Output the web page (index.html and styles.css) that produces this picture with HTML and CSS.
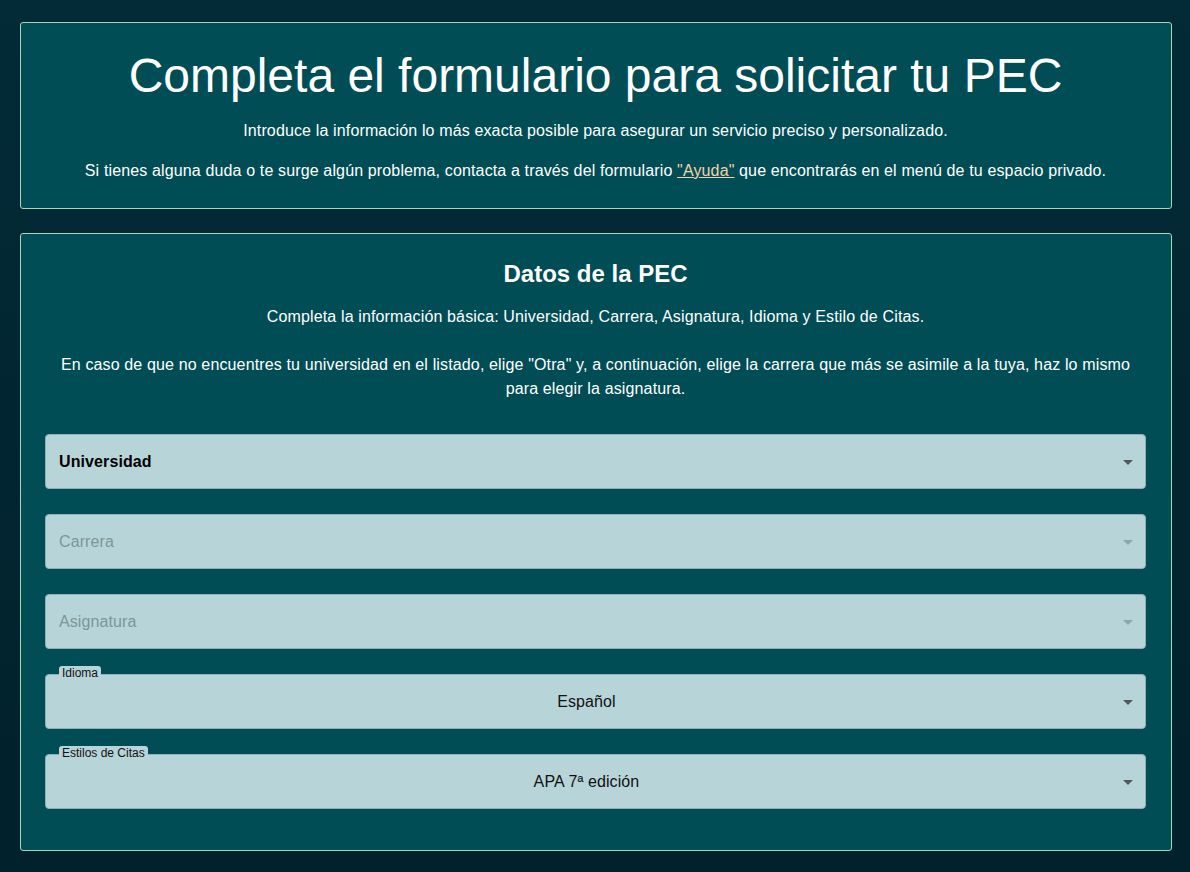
FILE: index.html
```html
<!DOCTYPE html>
<html lang="es">
<head>
<meta charset="utf-8">
<title>Solicitar PEC</title>
<link rel="stylesheet" href="styles.css">
</head>
<body>
<main class="page">
  <section class="card intro">
    <h1 class="title">Completa el formulario para solicitar tu PEC</h1>
    <p class="text">Introduce la información lo más exacta posible para asegurar un servicio preciso y personalizado.</p>
    <p class="text">Si tienes alguna duda o te surge algún problema, contacta a través del formulario <a class="link" href="#">"Ayuda"</a> que encontrarás en el menú de tu espacio privado.</p>
  </section>

  <section class="card form">
    <h2 class="subtitle">Datos de la PEC</h2>
    <p class="text first">Completa la información básica: Universidad, Carrera, Asignatura, Idioma y Estilo de Citas.</p>
    <p class="text gap">En caso de que no encuentres tu universidad en el listado, elige "Otra" y, a continuación, elige la carrera que más se asimile a la tuya, haz lo mismo para elegir la asignatura.</p>

    <div class="fields">
      <div class="field">
        <span class="value strong">Universidad</span>
        <span class="arrow"></span>
      </div>
      <div class="field disabled">
        <span class="value placeholder">Carrera</span>
        <span class="arrow"></span>
      </div>
      <div class="field disabled">
        <span class="value placeholder">Asignatura</span>
        <span class="arrow"></span>
      </div>
      <div class="field">
        <span class="label">Idioma</span>
        <span class="value centered">Español</span>
        <span class="arrow"></span>
      </div>
      <div class="field">
        <span class="label">Estilos de Citas</span>
        <span class="value centered">APA 7ª edición</span>
        <span class="arrow"></span>
      </div>
    </div>
  </section>
</main>
</body>
</html>
```

FILE: styles.css
```css
* { box-sizing: border-box; }

html, body {
  margin: 0;
  min-height: 100%;
}

body {
  font-family: "Liberation Sans", Arial, sans-serif;
  color: #ffffff;
  background: linear-gradient(180deg, #022b37 0%, #01212c 100%);
  min-height: 872px;
}

.page {
  padding: 22px 18px 22px 20px;
  display: flex;
  flex-direction: column;
  gap: 24px;
}

.card {
  background: #014d55;
  border: 1px solid #a3d8b9;
  border-radius: 3px;
  padding: 25px 25px 25px 24px;
  text-align: center;
}

.title {
  margin: 0 0 16px;
  font-size: 48px;
  font-weight: 400;
  line-height: 55px;
}

.text {
  margin: 16px 0 0;
  font-size: 16px;
  line-height: 24px;
  letter-spacing: 0.14px;
}

.link {
  color: #f3d2ad;
  text-decoration: underline;
}

.form {
  padding-top: 26px;
  padding-bottom: 41px;
}

.subtitle {
  margin: 0;
  font-size: 24px;
  font-weight: 700;
  line-height: 28px;
}

.text.first { margin-top: 17px; }
.text.gap { margin-top: 24px; }

.fields {
  margin-top: 33px;
  display: flex;
  flex-direction: column;
  gap: 25px;
  text-align: left;
}

.field {
  position: relative;
  height: 55px;
  background: #b7d5d8;
  border: 1px solid #8fb1b5;
  border-radius: 4px;
  display: flex;
  align-items: center;
  padding: 0 40px 0 13px;
  color: #111111;
  font-size: 16px;
  letter-spacing: 0.1px;
}

.value { flex: 1; }
.value.strong { font-weight: 700; color: #000; }
.value.placeholder { color: #7d9699; }
.value.centered { text-align: center; padding-left: 9px; }

.arrow {
  position: absolute;
  right: 12px;
  top: 50%;
  margin-top: -2px;
  width: 0;
  height: 0;
  border-left: 5px solid transparent;
  border-right: 5px solid transparent;
  border-top: 5px solid #4f5a5c;
}

.field.disabled .arrow { border-top-color: #8ea6a9; }

.label {
  position: absolute;
  top: -9px;
  left: 13px;
  padding: 0 3px;
  background: #b7d5d8;
  border-radius: 3px 3px 0 0;
  font-size: 12px;
  line-height: 15px;
  letter-spacing: 0;
  color: #111111;
}
```
